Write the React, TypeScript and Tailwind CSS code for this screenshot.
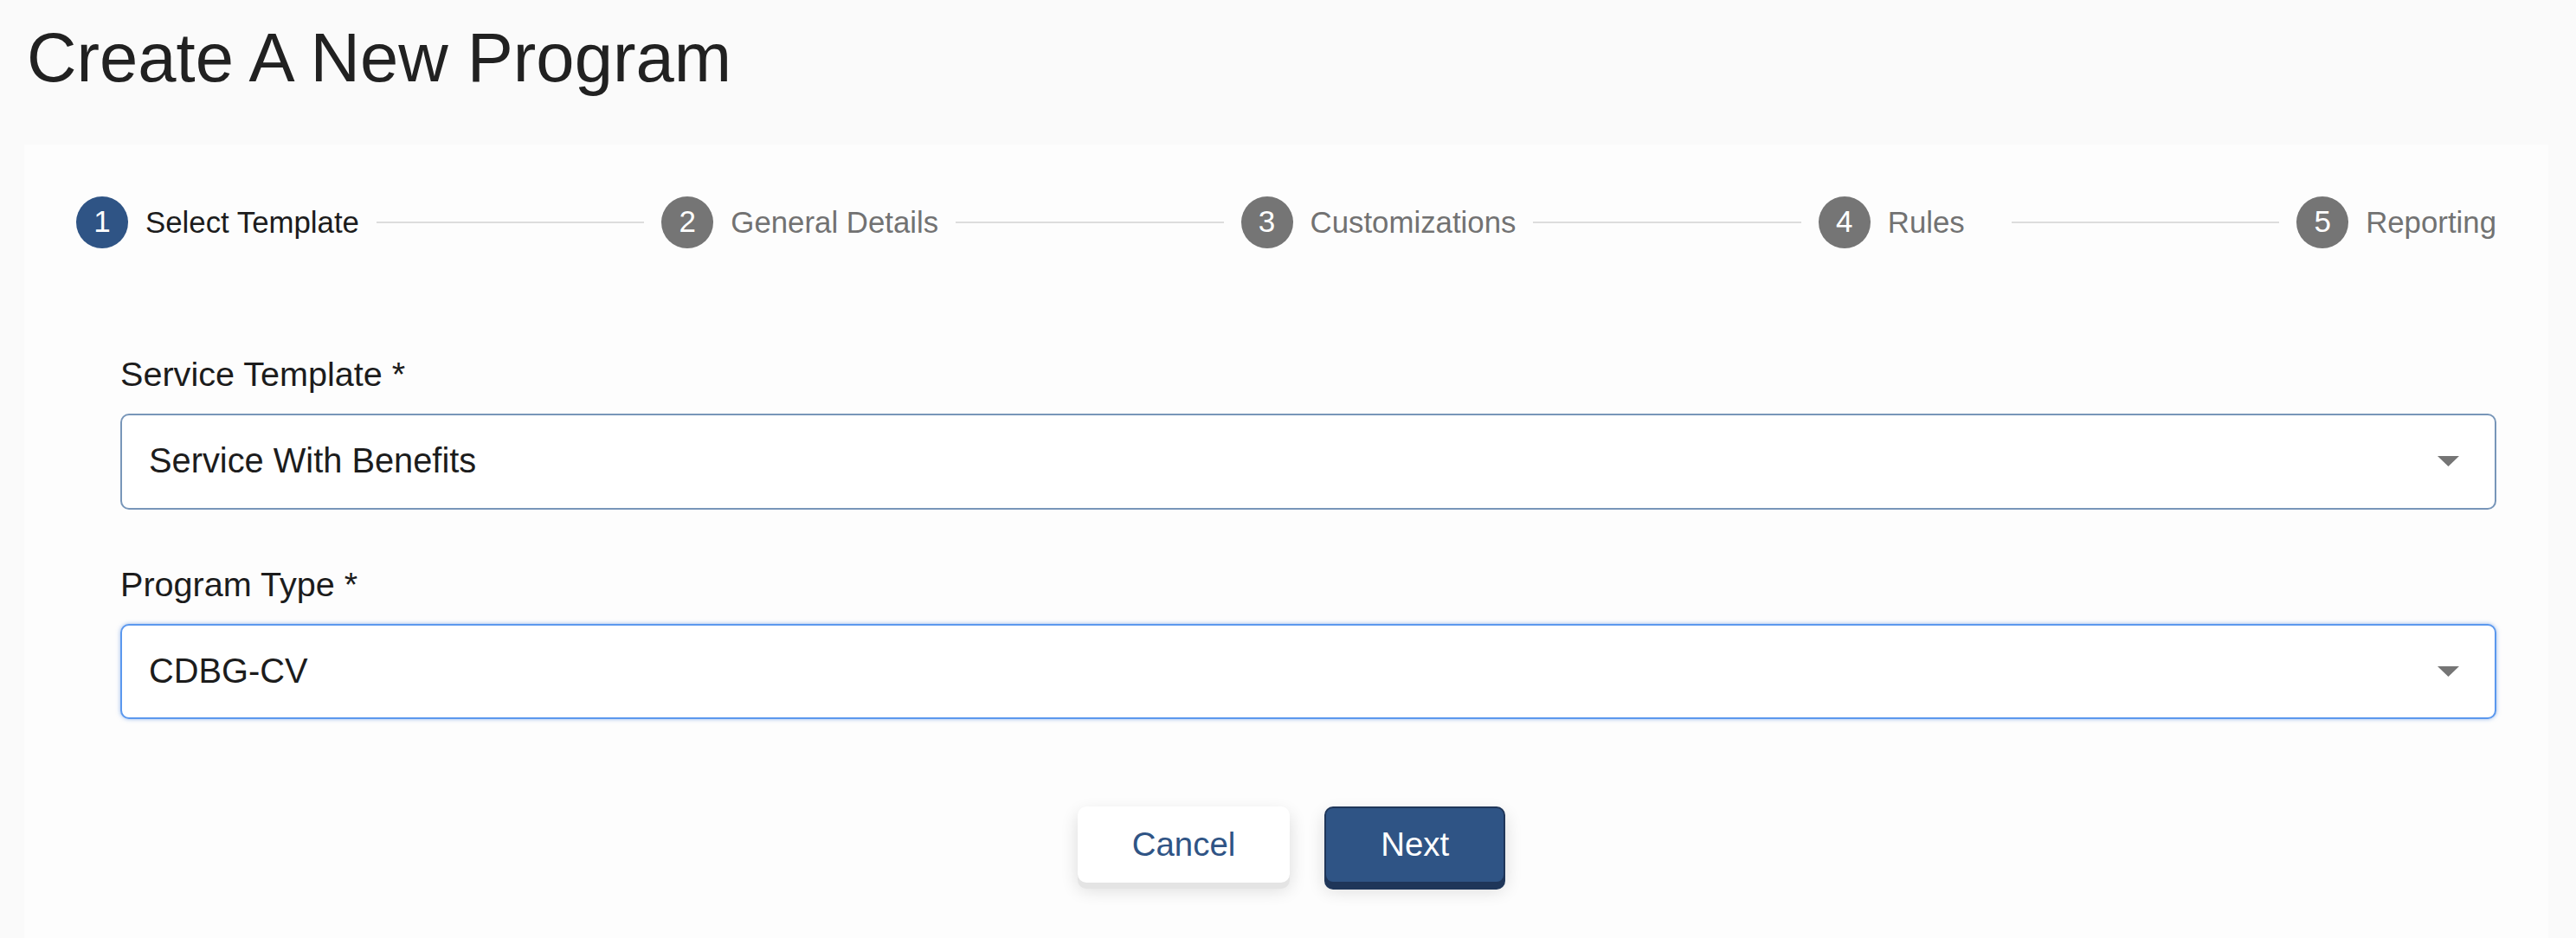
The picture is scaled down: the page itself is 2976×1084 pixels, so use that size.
import React from "react";

const font = { fontFamily: '"Liberation Sans", Arial, Helvetica, sans-serif' };

function Arrow() {
  return (
    <svg width="25" height="12" viewBox="0 0 25 12" className="shrink-0">
      <polygon points="0,0 25,0 12.5,12" fill="#757575" />
    </svg>
  );
}

function Step({ n, label, active, extraPr }: { n: number; label: string; active?: boolean; extraPr?: string }) {
  return (
    <div className={`flex items-center ${extraPr ?? ""}`}>
      <div
        className={`flex h-[60px] w-[60px] shrink-0 items-center justify-center rounded-full text-[35px] text-white ${
          active ? "bg-[#2f5485]" : "bg-[#757575]"
        }`}
      >
        {n}
      </div>
      <span className={`ml-[20px] whitespace-nowrap text-[34.8px] leading-[40px] ${active ? "text-[#1c1c1c]" : "text-[#727272]"}`}>
        {label}
      </span>
    </div>
  );
}

function Line() {
  return <div className="mx-[20px] h-[2px] flex-1 bg-[#dddddd]" />;
}

export default function App() {
  return (
    <div className="flex h-[1084px] w-full flex-col overflow-hidden bg-[#fafafa]" style={font}>
      <h1 className="pl-[31px] pt-[19px] text-[79.6px] font-normal leading-[1.2] text-[#212121]">Create A New Program</h1>
      <div className="ml-[28px] mr-[32px] mt-[52px] flex-1 bg-[#fdfdfd] p-[60px]">
        <div className="flex h-[60px] items-center">
          <Step n={1} label="Select Template" active />
          <Line />
          <Step n={2} label="General Details" />
          <Line />
          <Step n={3} label="Customizations" />
          <Line />
          <Step n={4} label="Rules" extraPr="pr-[34px]" />
          <Line />
          <Step n={5} label="Reporting" />
        </div>

        <div className="pl-[51px]">
          <div className="mt-[122px] text-[39.6px] leading-[46px] text-[#1c1c1c]">Service Template *</div>
          <div className="mt-[23px] flex h-[111px] items-center justify-between rounded-[10px] border-2 border-[#7896b9] bg-white pl-[31px] pr-[41px]">
            <span className="text-[39.8px] text-[#1c1c1c]">Service With Benefits</span>
            <Arrow />
          </div>

          <div className="mt-[63px] text-[39.6px] leading-[46px] text-[#1c1c1c]">Program Type *</div>
          <div className="mt-[23px] flex h-[110px] items-center justify-between rounded-[10px] border-2 border-[#5b98ee] bg-white pl-[31px] pr-[41px] shadow-[0_0_5px_rgba(70,130,220,0.55)]">
            <span className="text-[39.8px] text-[#1c1c1c]">CDBG-CV</span>
            <Arrow />
          </div>
        </div>

        <div className="mt-[101px] flex justify-center gap-[40px] pl-[12px]">
          <button className="h-[88px] rounded-[10px] bg-white px-[63px] text-[38.4px] text-[#2f5485] shadow-[0_7px_0_0_#e4e4e4,0_8px_20px_rgba(0,0,0,0.14)]">
            Cancel
          </button>
          <button className="h-[89px] rounded-[10px] border-2 border-[#1f3659] bg-[#2f5485] px-[63px] text-[38.4px] text-white shadow-[0_7px_0_0_#1f3659,0_8px_20px_rgba(0,0,0,0.14)]">
            Next
          </button>
        </div>
      </div>
    </div>
  );
}
